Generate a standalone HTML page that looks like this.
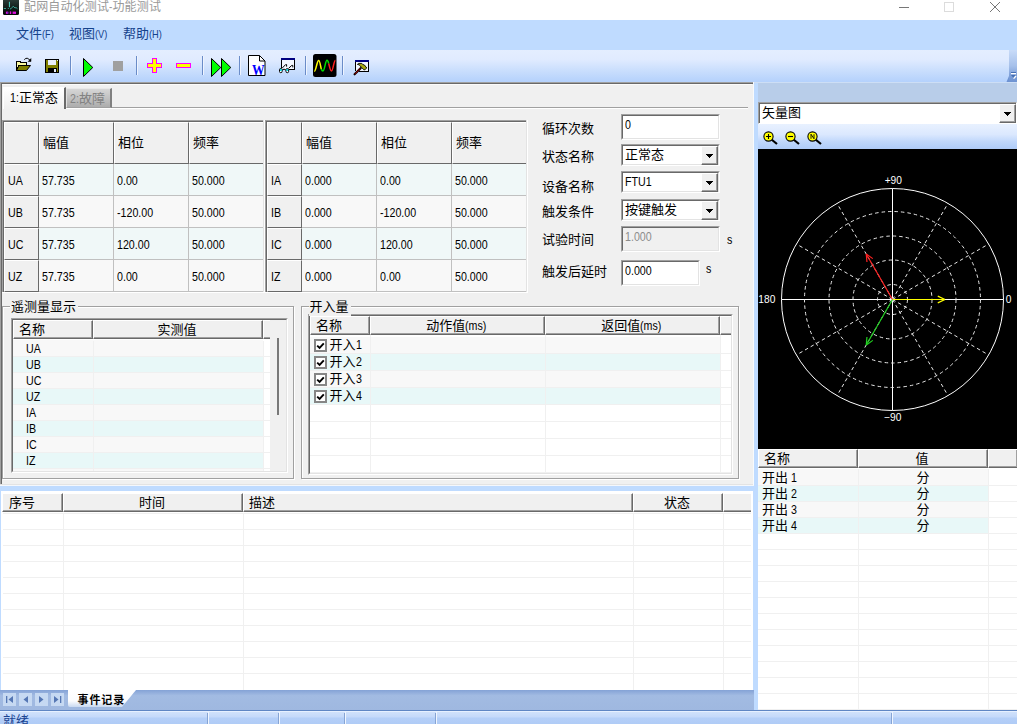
<!DOCTYPE html>
<html lang="zh-CN"><head><meta charset="utf-8"><title>配网自动化测试-功能测试</title>
<style>
html,body{margin:0;padding:0;background:#fff;}
body{width:1017px;height:724px;overflow:hidden;}
#app{position:relative;width:1017px;height:724px;overflow:hidden;background:#fff;
 font-family:"Liberation Sans","Noto Sans CJK SC",sans-serif;font-size:12px;color:#000;}
#app div{position:absolute;box-sizing:border-box;}
#app svg{position:absolute;overflow:visible;}
.t{white-space:nowrap;font-size:13px;}
.t .c{font-size:13px;}
.t .l{display:inline-block;transform:scaleX(0.82);transform-origin:0 50%;}
.m{white-space:nowrap;font-size:11px;color:#15428b;}
.m .c{font-size:13px;}
.ti .c{font-size:12px !important;}
.m .k{font-size:11px;display:inline-block;transform:scaleX(0.84);transform-origin:0 50%;}
.tb .c{font-size:11px !important;letter-spacing:0.9px !important;}

</style></head><body>
<div id="app">
<div class="" style="left:0px;top:0px;width:1017px;height:20px;background:#fff;"></div>
<svg style="left:3px;top:0px" width="16" height="15" viewBox="0 0 16 15">
<defs><linearGradient id="ig" x1="0" y1="0" x2="0" y2="1"><stop offset="0" stop-color="#2a3a36"/><stop offset="0.55" stop-color="#101c18"/><stop offset="1" stop-color="#040806"/></linearGradient></defs>
<path d="M0 0 L16 0 L16 13.5 Q16 15 14.5 15 L1.5 15 Q0 15 0 13.5 Z" fill="url(#ig)"/>
<rect x="5.9" y="1.8" width="1.1" height="5.4" fill="#48c8b8"/>
<path d="M0.8 8.5 L3 8.5 M4.8 8.5 L5.8 8.5 M7 9 L8.2 8.6 L10.2 6.2 L12 8 L13 7.5 L14.5 8.8" fill="none" stroke="#3fae9f" stroke-width="0.9"/>
<rect x="2.9" y="11.6" width="2.4" height="2.2" fill="#e010e0"/>
<rect x="6.8" y="11.4" width="1.4" height="2.6" fill="#e010e0"/>
<rect x="9.6" y="11.6" width="3.4" height="2.3" fill="#e010e0"/>
<rect x="4" y="12" width="1.2" height="1.6" fill="#7020d0"/>
</svg>
<div class="t ti" style="left:24px;top:-3px;height:20px;line-height:20px;color:#999;font-size:12px;letter-spacing:0.15px;"><span class="c">配网自动化测试</span><span class="l" style="margin-right:-0.78px">-</span><span class="c">功能测试</span></div>
<svg style="left:890px;top:0px" width="127" height="20" viewBox="0 0 127 20">
<line x1="9" y1="7.5" x2="19" y2="7.5" stroke="#777" stroke-width="1"/>
<rect x="54.5" y="2.5" width="9" height="9" fill="none" stroke="#dcdcdc" stroke-width="1"/>
<path d="M100 2 L110 12 M110 2 L100 12" stroke="#777" stroke-width="1" fill="none"/>
</svg>
<div class="" style="left:0px;top:20px;width:1017px;height:30px;background:#bfdbff;"></div>
<div class="m" style="left:16px;top:24px;height:20px;line-height:20px;"><span class="c">文件</span><span class="k">(F)</span></div>
<div class="m" style="left:69px;top:24px;height:20px;line-height:20px;"><span class="c">视图</span><span class="k">(V)</span></div>
<div class="m" style="left:123px;top:24px;height:20px;line-height:20px;"><span class="c">帮助</span><span class="k">(H)</span></div>
<div class="" style="left:0px;top:50px;width:1017px;height:32px;background:linear-gradient(#e4eeff 0%,#e0ebff 30%,#cbdffd 62%,#b4d1fc 100%);"></div>
<div class="" style="left:1009px;top:50px;width:8px;height:32px;background:linear-gradient(#c8dbf8 0%,#a6c0ea 50%,#7d9fd8 80%,#6e93d2 100%);"></div>
<svg style="left:1005px;top:70px" width="12" height="12" viewBox="0 0 12 12">
<path d="M4 6 L4 12 L1.5 12 Z" fill="#6e93d2"/>
<rect x="6" y="2" width="5" height="1" fill="#456fb4"/><rect x="6" y="3" width="5" height="1.2" fill="#fff"/>
<path d="M6 5 L11 5 L8.5 8 Z" fill="#456fb4"/>
<path d="M11 6 L8.6 8.6" stroke="#fff" stroke-width="1.3"/>
</svg>
<div class="" style="left:70px;top:56px;width:1px;height:19px;background:#6a8cc8;"></div>
<div class="" style="left:71px;top:56px;width:1px;height:19px;background:#eef4ff;"></div>
<div class="" style="left:136px;top:56px;width:1px;height:19px;background:#6a8cc8;"></div>
<div class="" style="left:137px;top:56px;width:1px;height:19px;background:#eef4ff;"></div>
<div class="" style="left:202px;top:56px;width:1px;height:19px;background:#6a8cc8;"></div>
<div class="" style="left:203px;top:56px;width:1px;height:19px;background:#eef4ff;"></div>
<div class="" style="left:239px;top:56px;width:1px;height:19px;background:#6a8cc8;"></div>
<div class="" style="left:240px;top:56px;width:1px;height:19px;background:#eef4ff;"></div>
<div class="" style="left:305px;top:56px;width:1px;height:19px;background:#6a8cc8;"></div>
<div class="" style="left:306px;top:56px;width:1px;height:19px;background:#eef4ff;"></div>
<div class="" style="left:342px;top:56px;width:1px;height:19px;background:#6a8cc8;"></div>
<div class="" style="left:343px;top:56px;width:1px;height:19px;background:#eef4ff;"></div>
<svg style="left:0;top:50px" width="400" height="32" viewBox="0 50 400 32">
<!-- open folder -->
<g shape-rendering="crispEdges">
<path d="M16.5 70.5 L16.5 61.5 L20.5 61.5 L20.5 62.5 L26.5 62.5 L26.5 65.5 L18.5 65.5 Z" fill="#f8f8a0" stroke="#000" stroke-width="1"/>
</g>
<path d="M16.5 70.5 L19 65.5 L30.5 65.5 L26.5 70.5 Z" fill="#808000" stroke="#000" stroke-width="1" stroke-linejoin="miter"/>
<path d="M24.3 59.6 Q27.2 56.4 30.2 60.6" fill="none" stroke="#000" stroke-width="1"/>
<path d="M31 58.6 L31 61.5 L28.2 61.5 Z" fill="#000" stroke="#000" stroke-width="0.5"/>
<!-- save -->
<g shape-rendering="crispEdges">
<rect x="45.5" y="59.5" width="13" height="13" fill="#808000" stroke="#000" stroke-width="1"/>
<rect x="48" y="60" width="8" height="5" fill="#e8eefa"/>
<rect x="48" y="68" width="9" height="4" fill="#000"/>
<rect x="54" y="69" width="2" height="3" fill="#e8eefa"/>
<rect x="57" y="60" width="1" height="1" fill="#e8eefa"/>
</g>
<!-- play -->
<path d="M83.5 58.5 L92.8 67.5 L83.5 76.5 Z" fill="#00ff00" stroke="#000" stroke-width="1"/>
<!-- stop -->
<rect x="113" y="61" width="10" height="10" fill="#a0a0a0"/>
<!-- plus -->
<g shape-rendering="crispEdges">
<path d="M152.5 58.5 L156.5 58.5 L156.5 63.5 L161.5 63.5 L161.5 67.5 L156.5 67.5 L156.5 72.5 L152.5 72.5 L152.5 67.5 L147.5 67.5 L147.5 63.5 L152.5 63.5 Z" fill="#ffff00" stroke="#ff00ff" stroke-width="1"/>
<!-- minus -->
<rect x="176.5" y="63.5" width="14" height="4" fill="#ffff00" stroke="#ff00ff" stroke-width="1"/>
</g>
<!-- ff -->
<path d="M211.5 58.5 L220.8 67.5 L211.5 76.5 Z" fill="#00ff00" stroke="#000" stroke-width="1"/>
<path d="M221.5 58.5 L230.8 67.5 L221.5 76.5 Z" fill="#00ff00" stroke="#000" stroke-width="1"/>
<!-- word doc -->
<path d="M248.5 55.5 L259.5 55.5 L265 61 L265 75.5 L248.5 75.5 Z" fill="#fff" stroke="#000" stroke-width="1"/>
<path d="M259.5 55.5 L259.5 61 L265 61" fill="none" stroke="#000" stroke-width="1"/>
<text x="252" y="75.3" font-family="Liberation Serif, serif" font-weight="bold" font-size="14.5" textLength="12.6" lengthAdjust="spacingAndGlyphs" fill="#0000ff">W</text>
<!-- glasses chart -->
<g shape-rendering="crispEdges">
<rect x="282" y="60" width="12" height="9" fill="#f4f8ff"/>
<rect x="281" y="58" width="14" height="2" fill="#000080"/>
<rect x="281" y="60" width="1" height="8" fill="#000"/>
<rect x="294" y="60" width="1" height="10" fill="#000"/>
<rect x="289" y="69" width="6" height="1" fill="#000"/>
</g>
<path d="M282 68.3 L285.6 64.6 L286.6 64.6 L286.6 66.6 M288.6 68.3 L291.8 65.4 L292.8 65.4 L292.8 67.4" fill="none" stroke="#000" stroke-width="1"/>
<rect x="279.5" y="68.5" width="2.6" height="4.2" rx="1.2" fill="#fff" stroke="#000" stroke-width="1"/>
<rect x="286" y="68.5" width="2.6" height="4.2" rx="1.2" fill="#fff" stroke="#000" stroke-width="1"/>
<rect x="280" y="69" width="1.6" height="2" fill="#00e8e8"/>
<rect x="286.5" y="69" width="1.6" height="2" fill="#00e8e8"/>
<path d="M282.3 70 Q284 68.2 285.8 70" fill="none" stroke="#000" stroke-width="1"/>
<!-- wave -->
<rect x="313" y="54" width="23.5" height="23" rx="2.5" fill="#000"/>
<path d="M314.3 71.3 C316 71.3 317 60.5 318.6 60.5 C320 60.5 320.4 66 321.3 69" fill="none" stroke="#ffff00" stroke-width="1.5"/>
<path d="M321.3 69 C321.8 70.5 322.4 71 323 71 C324.6 71 325.4 60.3 327 60.3 C327.8 60.3 328.2 61.5 328.7 63.5" fill="none" stroke="#00e000" stroke-width="1.5"/>
<path d="M328.7 63.5 C329.6 67 330.3 71 331.5 71 C333 71 333.8 60.5 335.4 60.5" fill="none" stroke="#ff2020" stroke-width="1.5"/>
<!-- hammer -->
<g shape-rendering="crispEdges">
<rect x="356" y="62" width="12" height="9" fill="#f4f8ff"/>
<rect x="355" y="60" width="14" height="2" fill="#000080"/>
<rect x="355" y="62" width="1" height="9" fill="#000"/>
<rect x="368" y="62" width="1" height="10" fill="#000"/>
<rect x="359" y="71" width="10" height="1" fill="#000"/>
</g>
<path d="M354.6 74.3 L360.6 68.2" stroke="#000" stroke-width="2.2" stroke-linecap="round"/>
<path d="M354.8 74.1 L360.6 68.2" stroke="#c00000" stroke-width="1.1" stroke-dasharray="1 0.7"/>
<path d="M357.4 64.4 L358.6 63.4 L361.8 63.4 L362.6 64.4 L364.4 65 L366.8 68 L365.4 69 L364.4 70.2 L363.4 69 L361.4 67.6 L360.4 66 L359 64.8 Z" fill="#a8a810" stroke="#000" stroke-width="0.9"/>
</svg>
<div class="" style="left:0px;top:82px;width:754px;height:402px;background:#f0f0f0;"></div>
<div class="" style="left:0px;top:484px;width:754px;height:1px;background:#e3e3e3;"></div>
<div class="" style="left:0px;top:485px;width:754px;height:1px;background:#f4f7fc;"></div>
<div class="" style="left:0px;top:82px;width:753px;height:1px;background:#a0a0a0;"></div>
<div class="" style="left:1px;top:83px;width:752px;height:1px;background:#696969;"></div>
<div class="" style="left:2px;top:84px;width:750px;height:1px;background:#fbfbfb;"></div>
<div class="" style="left:0px;top:82px;width:1px;height:402px;background:#a0a0a0;"></div>
<div class="" style="left:1px;top:83px;width:1px;height:401px;background:#696969;"></div>
<div class="" style="left:752px;top:84px;width:1px;height:400px;background:#f0f0f0;"></div>
<div class="" style="left:753px;top:82px;width:1px;height:403px;background:#f8fafc;"></div>
<div class="" style="left:754px;top:82px;width:4px;height:630px;background:#bfdbff;"></div>
<div class="" style="left:66px;top:107px;width:682px;height:1px;background:#a0a0a0;"></div>
<div class="" style="left:66px;top:108px;width:682px;height:1px;background:#fff;"></div>
<div class="" style="left:66px;top:88px;width:46px;height:20px;background:linear-gradient(#d6d6d6,#adadad);border-top:1px solid #e8e8e8;border-left:1px solid #e0e0e0;border-right:2px solid #808080;border-bottom:1px solid #a0a0a0;"></div>
<div class="t" style="left:70px;top:88.5px;height:20px;line-height:20px;color:#828282;"><span class="l" style="margin-right:-1.95px">2:</span><span class="c">故障</span></div>
<div class="" style="left:3px;top:87px;width:63px;height:22px;background:linear-gradient(#ffffff,#f0f0f0);border-top:1px solid #fff;border-left:1px solid #fff;border-right:2px solid #696969;"></div>
<div class="t" style="left:10px;top:87.5px;height:20px;line-height:20px;"><span class="l" style="margin-right:-1.95px">1:</span><span class="c">正常态</span></div>
<div class="" style="left:2px;top:120px;width:263px;height:172px;background:#f0f0f0;"></div>
<div class="" style="left:2px;top:120px;width:261px;height:1px;background:#a0a0a0;"></div>
<div class="" style="left:2px;top:121px;width:261px;height:1px;background:#696969;"></div>
<div class="" style="left:2px;top:120px;width:1px;height:172px;background:#a0a0a0;"></div>
<div class="" style="left:3px;top:121px;width:1px;height:171px;background:#696969;"></div>
<div class="" style="left:2px;top:292px;width:263px;height:1px;background:#fff;"></div>
<div class="" style="left:263px;top:120px;width:1px;height:172px;background:#e3e3e3;"></div>
<div class="" style="left:264px;top:120px;width:1px;height:173px;background:#fff;"></div>
<div class="" style="left:4px;top:122px;width:35px;height:42px;background:#f0f0f0;border-right:1px solid #696969;border-bottom:1px solid #696969;border-top:1px solid #fff;border-left:1px solid #fff;"></div>
<div class="" style="left:39px;top:122px;width:75px;height:42px;background:#f0f0f0;border-right:1px solid #696969;border-bottom:1px solid #696969;border-top:1px solid #fff;border-left:1px solid #fff;"></div>
<div class="t" style="left:43px;top:133px;height:20px;line-height:20px;"><span class="c">幅值</span></div>
<div class="" style="left:114px;top:122px;width:75px;height:42px;background:#f0f0f0;border-right:1px solid #696969;border-bottom:1px solid #696969;border-top:1px solid #fff;border-left:1px solid #fff;"></div>
<div class="t" style="left:118px;top:133px;height:20px;line-height:20px;"><span class="c">相位</span></div>
<div class="" style="left:189px;top:122px;width:74px;height:42px;background:#f0f0f0;border-bottom:1px solid #696969;border-top:1px solid #fff;border-left:1px solid #fff;"></div>
<div class="t" style="left:193px;top:133px;height:20px;line-height:20px;"><span class="c">频率</span></div>
<div class="" style="left:4px;top:164px;width:35px;height:32px;background:#f0f0f0;border-right:1px solid #696969;border-bottom:1px solid #696969;border-top:1px solid #fff;border-left:1px solid #fff;"></div>
<div class="t" style="left:8px;top:171px;height:20px;line-height:20px;"><span class="l" style="margin-right:-3.25px">UA</span></div>
<div class="" style="left:39px;top:164px;width:75px;height:32px;background:#f0f8f8;border-right:1px solid #c0c0c0;border-bottom:1px solid #c0c0c0;"></div>
<div class="t" style="left:42px;top:171px;height:20px;line-height:20px;"><span class="l" style="margin-right:-7.16px">57.735</span></div>
<div class="" style="left:114px;top:164px;width:75px;height:32px;background:#f0f8f8;border-right:1px solid #c0c0c0;border-bottom:1px solid #c0c0c0;"></div>
<div class="t" style="left:117px;top:171px;height:20px;line-height:20px;"><span class="l" style="margin-right:-4.55px">0.00</span></div>
<div class="" style="left:189px;top:164px;width:74px;height:32px;background:#f0f8f8;border-bottom:1px solid #c0c0c0;"></div>
<div class="t" style="left:192px;top:171px;height:20px;line-height:20px;"><span class="l" style="margin-right:-7.16px">50.000</span></div>
<div class="" style="left:4px;top:196px;width:35px;height:32px;background:#f0f0f0;border-right:1px solid #696969;border-bottom:1px solid #696969;border-top:1px solid #fff;border-left:1px solid #fff;"></div>
<div class="t" style="left:8px;top:203px;height:20px;line-height:20px;"><span class="l" style="margin-right:-3.25px">UB</span></div>
<div class="" style="left:39px;top:196px;width:75px;height:32px;background:#f8f8f8;border-right:1px solid #c0c0c0;border-bottom:1px solid #c0c0c0;"></div>
<div class="t" style="left:42px;top:203px;height:20px;line-height:20px;"><span class="l" style="margin-right:-7.16px">57.735</span></div>
<div class="" style="left:114px;top:196px;width:75px;height:32px;background:#f8f8f8;border-right:1px solid #c0c0c0;border-bottom:1px solid #c0c0c0;"></div>
<div class="t" style="left:117px;top:203px;height:20px;line-height:20px;"><span class="l" style="margin-right:-7.94px">-120.00</span></div>
<div class="" style="left:189px;top:196px;width:74px;height:32px;background:#f8f8f8;border-bottom:1px solid #c0c0c0;"></div>
<div class="t" style="left:192px;top:203px;height:20px;line-height:20px;"><span class="l" style="margin-right:-7.16px">50.000</span></div>
<div class="" style="left:4px;top:228px;width:35px;height:32px;background:#f0f0f0;border-right:1px solid #696969;border-bottom:1px solid #696969;border-top:1px solid #fff;border-left:1px solid #fff;"></div>
<div class="t" style="left:8px;top:235px;height:20px;line-height:20px;"><span class="l" style="margin-right:-3.38px">UC</span></div>
<div class="" style="left:39px;top:228px;width:75px;height:32px;background:#f0f8f8;border-right:1px solid #c0c0c0;border-bottom:1px solid #c0c0c0;"></div>
<div class="t" style="left:42px;top:235px;height:20px;line-height:20px;"><span class="l" style="margin-right:-7.16px">57.735</span></div>
<div class="" style="left:114px;top:228px;width:75px;height:32px;background:#f0f8f8;border-right:1px solid #c0c0c0;border-bottom:1px solid #c0c0c0;"></div>
<div class="t" style="left:117px;top:235px;height:20px;line-height:20px;"><span class="l" style="margin-right:-7.16px">120.00</span></div>
<div class="" style="left:189px;top:228px;width:74px;height:32px;background:#f0f8f8;border-bottom:1px solid #c0c0c0;"></div>
<div class="t" style="left:192px;top:235px;height:20px;line-height:20px;"><span class="l" style="margin-right:-7.16px">50.000</span></div>
<div class="" style="left:4px;top:260px;width:35px;height:32px;background:#f0f0f0;border-right:1px solid #696969;border-bottom:1px solid #696969;border-top:1px solid #fff;border-left:1px solid #fff;"></div>
<div class="t" style="left:8px;top:267px;height:20px;line-height:20px;"><span class="l" style="margin-right:-3.12px">UZ</span></div>
<div class="" style="left:39px;top:260px;width:75px;height:32px;background:#f8f8f8;border-right:1px solid #c0c0c0;border-bottom:1px solid #c0c0c0;"></div>
<div class="t" style="left:42px;top:267px;height:20px;line-height:20px;"><span class="l" style="margin-right:-7.16px">57.735</span></div>
<div class="" style="left:114px;top:260px;width:75px;height:32px;background:#f8f8f8;border-right:1px solid #c0c0c0;border-bottom:1px solid #c0c0c0;"></div>
<div class="t" style="left:117px;top:267px;height:20px;line-height:20px;"><span class="l" style="margin-right:-4.55px">0.00</span></div>
<div class="" style="left:189px;top:260px;width:74px;height:32px;background:#f8f8f8;border-bottom:1px solid #c0c0c0;"></div>
<div class="t" style="left:192px;top:267px;height:20px;line-height:20px;"><span class="l" style="margin-right:-7.16px">50.000</span></div>
<div class="" style="left:265px;top:120px;width:263px;height:172px;background:#f0f0f0;"></div>
<div class="" style="left:265px;top:120px;width:261px;height:1px;background:#a0a0a0;"></div>
<div class="" style="left:265px;top:121px;width:261px;height:1px;background:#696969;"></div>
<div class="" style="left:265px;top:120px;width:1px;height:172px;background:#a0a0a0;"></div>
<div class="" style="left:266px;top:121px;width:1px;height:171px;background:#696969;"></div>
<div class="" style="left:265px;top:292px;width:263px;height:1px;background:#fff;"></div>
<div class="" style="left:526px;top:120px;width:1px;height:172px;background:#e3e3e3;"></div>
<div class="" style="left:527px;top:120px;width:1px;height:173px;background:#fff;"></div>
<div class="" style="left:267px;top:122px;width:35px;height:42px;background:#f0f0f0;border-right:1px solid #696969;border-bottom:1px solid #696969;border-top:1px solid #fff;border-left:1px solid #fff;"></div>
<div class="" style="left:302px;top:122px;width:75px;height:42px;background:#f0f0f0;border-right:1px solid #696969;border-bottom:1px solid #696969;border-top:1px solid #fff;border-left:1px solid #fff;"></div>
<div class="t" style="left:306px;top:133px;height:20px;line-height:20px;"><span class="c">幅值</span></div>
<div class="" style="left:377px;top:122px;width:75px;height:42px;background:#f0f0f0;border-right:1px solid #696969;border-bottom:1px solid #696969;border-top:1px solid #fff;border-left:1px solid #fff;"></div>
<div class="t" style="left:381px;top:133px;height:20px;line-height:20px;"><span class="c">相位</span></div>
<div class="" style="left:452px;top:122px;width:74px;height:42px;background:#f0f0f0;border-bottom:1px solid #696969;border-top:1px solid #fff;border-left:1px solid #fff;"></div>
<div class="t" style="left:456px;top:133px;height:20px;line-height:20px;"><span class="c">频率</span></div>
<div class="" style="left:267px;top:164px;width:35px;height:32px;background:#f0f0f0;border-right:1px solid #696969;border-bottom:1px solid #696969;border-top:1px solid #fff;border-left:1px solid #fff;"></div>
<div class="t" style="left:271px;top:171px;height:20px;line-height:20px;"><span class="l" style="margin-right:-2.21px">IA</span></div>
<div class="" style="left:302px;top:164px;width:75px;height:32px;background:#f0f8f8;border-right:1px solid #c0c0c0;border-bottom:1px solid #c0c0c0;"></div>
<div class="t" style="left:305px;top:171px;height:20px;line-height:20px;"><span class="l" style="margin-right:-5.86px">0.000</span></div>
<div class="" style="left:377px;top:164px;width:75px;height:32px;background:#f0f8f8;border-right:1px solid #c0c0c0;border-bottom:1px solid #c0c0c0;"></div>
<div class="t" style="left:380px;top:171px;height:20px;line-height:20px;"><span class="l" style="margin-right:-4.55px">0.00</span></div>
<div class="" style="left:452px;top:164px;width:74px;height:32px;background:#f0f8f8;border-bottom:1px solid #c0c0c0;"></div>
<div class="t" style="left:455px;top:171px;height:20px;line-height:20px;"><span class="l" style="margin-right:-7.16px">50.000</span></div>
<div class="" style="left:267px;top:196px;width:35px;height:32px;background:#f0f0f0;border-right:1px solid #696969;border-bottom:1px solid #696969;border-top:1px solid #fff;border-left:1px solid #fff;"></div>
<div class="t" style="left:271px;top:203px;height:20px;line-height:20px;"><span class="l" style="margin-right:-2.21px">IB</span></div>
<div class="" style="left:302px;top:196px;width:75px;height:32px;background:#f8f8f8;border-right:1px solid #c0c0c0;border-bottom:1px solid #c0c0c0;"></div>
<div class="t" style="left:305px;top:203px;height:20px;line-height:20px;"><span class="l" style="margin-right:-5.86px">0.000</span></div>
<div class="" style="left:377px;top:196px;width:75px;height:32px;background:#f8f8f8;border-right:1px solid #c0c0c0;border-bottom:1px solid #c0c0c0;"></div>
<div class="t" style="left:380px;top:203px;height:20px;line-height:20px;"><span class="l" style="margin-right:-7.94px">-120.00</span></div>
<div class="" style="left:452px;top:196px;width:74px;height:32px;background:#f8f8f8;border-bottom:1px solid #c0c0c0;"></div>
<div class="t" style="left:455px;top:203px;height:20px;line-height:20px;"><span class="l" style="margin-right:-7.16px">50.000</span></div>
<div class="" style="left:267px;top:228px;width:35px;height:32px;background:#f0f0f0;border-right:1px solid #696969;border-bottom:1px solid #696969;border-top:1px solid #fff;border-left:1px solid #fff;"></div>
<div class="t" style="left:271px;top:235px;height:20px;line-height:20px;"><span class="l" style="margin-right:-2.34px">IC</span></div>
<div class="" style="left:302px;top:228px;width:75px;height:32px;background:#f0f8f8;border-right:1px solid #c0c0c0;border-bottom:1px solid #c0c0c0;"></div>
<div class="t" style="left:305px;top:235px;height:20px;line-height:20px;"><span class="l" style="margin-right:-5.86px">0.000</span></div>
<div class="" style="left:377px;top:228px;width:75px;height:32px;background:#f0f8f8;border-right:1px solid #c0c0c0;border-bottom:1px solid #c0c0c0;"></div>
<div class="t" style="left:380px;top:235px;height:20px;line-height:20px;"><span class="l" style="margin-right:-7.16px">120.00</span></div>
<div class="" style="left:452px;top:228px;width:74px;height:32px;background:#f0f8f8;border-bottom:1px solid #c0c0c0;"></div>
<div class="t" style="left:455px;top:235px;height:20px;line-height:20px;"><span class="l" style="margin-right:-7.16px">50.000</span></div>
<div class="" style="left:267px;top:260px;width:35px;height:32px;background:#f0f0f0;border-right:1px solid #696969;border-bottom:1px solid #696969;border-top:1px solid #fff;border-left:1px solid #fff;"></div>
<div class="t" style="left:271px;top:267px;height:20px;line-height:20px;"><span class="l" style="margin-right:-2.08px">IZ</span></div>
<div class="" style="left:302px;top:260px;width:75px;height:32px;background:#f8f8f8;border-right:1px solid #c0c0c0;border-bottom:1px solid #c0c0c0;"></div>
<div class="t" style="left:305px;top:267px;height:20px;line-height:20px;"><span class="l" style="margin-right:-5.86px">0.000</span></div>
<div class="" style="left:377px;top:260px;width:75px;height:32px;background:#f8f8f8;border-right:1px solid #c0c0c0;border-bottom:1px solid #c0c0c0;"></div>
<div class="t" style="left:380px;top:267px;height:20px;line-height:20px;"><span class="l" style="margin-right:-4.55px">0.00</span></div>
<div class="" style="left:452px;top:260px;width:74px;height:32px;background:#f8f8f8;border-bottom:1px solid #c0c0c0;"></div>
<div class="t" style="left:455px;top:267px;height:20px;line-height:20px;"><span class="l" style="margin-right:-7.16px">50.000</span></div>
<div class="t" style="left:542px;top:118.5px;height:20px;line-height:20px;"><span class="c">循环次数</span></div>
<div class="t" style="left:542px;top:147px;height:20px;line-height:20px;"><span class="c">状态名称</span></div>
<div class="t" style="left:542px;top:177px;height:20px;line-height:20px;"><span class="c">设备名称</span></div>
<div class="t" style="left:542px;top:202px;height:20px;line-height:20px;"><span class="c">触发条件</span></div>
<div class="t" style="left:542px;top:230px;height:20px;line-height:20px;"><span class="c">试验时间</span></div>
<div class="t" style="left:542px;top:262px;height:20px;line-height:20px;"><span class="c">触发后延时</span></div>
<div class="" style="left:621px;top:114px;width:99px;height:26px;background:#fff;border-top:1px solid #a0a0a0;border-left:1px solid #a0a0a0;border-right:1px solid #fff;border-bottom:1px solid #fff;"></div>
<div class="" style="left:622px;top:115px;width:97px;height:24px;border-top:1px solid #696969;border-left:1px solid #696969;border-right:1px solid #e3e3e3;border-bottom:1px solid #e3e3e3;"></div>
<div class="t" style="left:625px;top:114.5px;height:20px;line-height:20px;"><span class="l" style="margin-right:-1.30px">0</span></div>
<div class="" style="left:621px;top:144px;width:99px;height:22px;background:#fff;border-top:1px solid #a0a0a0;border-left:1px solid #a0a0a0;border-right:1px solid #fff;border-bottom:1px solid #fff;"></div>
<div class="" style="left:622px;top:145px;width:97px;height:20px;border-top:1px solid #696969;border-left:1px solid #696969;border-right:1px solid #e3e3e3;border-bottom:1px solid #e3e3e3;"></div>
<div class="t" style="left:625px;top:144.5px;height:20px;line-height:20px;"><span class="c">正常态</span></div>
<div class="" style="left:701px;top:146px;width:17px;height:19px;background:#f0f0f0;border-top:1px solid #fff;border-left:1px solid #fff;border-right:1px solid #696969;border-bottom:1px solid #696969;"></div>
<div class="" style="left:702px;top:147px;width:15px;height:17px;border-right:1px solid #a0a0a0;border-bottom:1px solid #a0a0a0;"></div>
<svg style="left:706px;top:154px" width="7" height="4" viewBox="0 0 7 4" shape-rendering="crispEdges"><path d="M0 0 L7 0 L3.5 4 Z" fill="#000"/></svg>
<div class="" style="left:621px;top:171px;width:99px;height:22px;background:#fff;border-top:1px solid #a0a0a0;border-left:1px solid #a0a0a0;border-right:1px solid #fff;border-bottom:1px solid #fff;"></div>
<div class="" style="left:622px;top:172px;width:97px;height:20px;border-top:1px solid #696969;border-left:1px solid #696969;border-right:1px solid #e3e3e3;border-bottom:1px solid #e3e3e3;"></div>
<div class="t" style="left:625px;top:171.5px;height:20px;line-height:20px;"><span class="l" style="margin-right:-5.85px">FTU1</span></div>
<div class="" style="left:701px;top:173px;width:17px;height:19px;background:#f0f0f0;border-top:1px solid #fff;border-left:1px solid #fff;border-right:1px solid #696969;border-bottom:1px solid #696969;"></div>
<div class="" style="left:702px;top:174px;width:15px;height:17px;border-right:1px solid #a0a0a0;border-bottom:1px solid #a0a0a0;"></div>
<svg style="left:706px;top:181px" width="7" height="4" viewBox="0 0 7 4" shape-rendering="crispEdges"><path d="M0 0 L7 0 L3.5 4 Z" fill="#000"/></svg>
<div class="" style="left:621px;top:199px;width:99px;height:22px;background:#fff;border-top:1px solid #a0a0a0;border-left:1px solid #a0a0a0;border-right:1px solid #fff;border-bottom:1px solid #fff;"></div>
<div class="" style="left:622px;top:200px;width:97px;height:20px;border-top:1px solid #696969;border-left:1px solid #696969;border-right:1px solid #e3e3e3;border-bottom:1px solid #e3e3e3;"></div>
<div class="t" style="left:625px;top:199.5px;height:20px;line-height:20px;"><span class="c">按键触发</span></div>
<div class="" style="left:701px;top:201px;width:17px;height:19px;background:#f0f0f0;border-top:1px solid #fff;border-left:1px solid #fff;border-right:1px solid #696969;border-bottom:1px solid #696969;"></div>
<div class="" style="left:702px;top:202px;width:15px;height:17px;border-right:1px solid #a0a0a0;border-bottom:1px solid #a0a0a0;"></div>
<svg style="left:706px;top:209px" width="7" height="4" viewBox="0 0 7 4" shape-rendering="crispEdges"><path d="M0 0 L7 0 L3.5 4 Z" fill="#000"/></svg>
<div class="" style="left:621px;top:226px;width:99px;height:26px;background:#f0f0f0;border-top:1px solid #a0a0a0;border-left:1px solid #a0a0a0;border-right:1px solid #fff;border-bottom:1px solid #fff;"></div>
<div class="" style="left:622px;top:227px;width:97px;height:24px;border-top:1px solid #696969;border-left:1px solid #696969;border-right:1px solid #e3e3e3;border-bottom:1px solid #e3e3e3;"></div>
<div class="t" style="left:625px;top:226.5px;height:20px;line-height:20px;color:#8c8c8c;"><span class="l" style="margin-right:-5.86px">1.000</span></div>
<div class="" style="left:621px;top:260px;width:79px;height:26px;background:#fff;border-top:1px solid #a0a0a0;border-left:1px solid #a0a0a0;border-right:1px solid #fff;border-bottom:1px solid #fff;"></div>
<div class="" style="left:622px;top:261px;width:77px;height:24px;border-top:1px solid #696969;border-left:1px solid #696969;border-right:1px solid #e3e3e3;border-bottom:1px solid #e3e3e3;"></div>
<div class="t" style="left:625px;top:260.5px;height:20px;line-height:20px;"><span class="l" style="margin-right:-5.86px">0.000</span></div>
<div class="t" style="left:727px;top:229.5px;height:20px;line-height:20px;"><span class="l" style="margin-right:-1.17px">s</span></div>
<div class="t" style="left:706px;top:258.5px;height:20px;line-height:20px;"><span class="l" style="margin-right:-1.17px">s</span></div>
<div class="" style="left:2px;top:306px;width:292px;height:173px;border:1px solid #a0a0a0;"></div>
<div class="" style="left:3px;top:307px;width:292px;height:173px;border:1px solid #fff;border-right:1px solid #fff;"></div>
<div class="" style="left:2px;top:306px;width:292px;height:173px;border:1px solid #a0a0a0;border-right:none;border-bottom:none;"></div>
<div class="" style="left:2px;top:306px;width:292px;height:173px;border-right:1px solid #a0a0a0;border-bottom:1px solid #a0a0a0;"></div>
<div class="" style="left:11px;top:318px;width:277px;height:155px;background:#fff;border-top:1px solid #a0a0a0;border-left:1px solid #a0a0a0;border-right:1px solid #fff;border-bottom:1px solid #fff;"></div>
<div class="" style="left:12px;top:319px;width:275px;height:153px;border-top:1px solid #696969;border-left:1px solid #696969;border-right:1px solid #e3e3e3;border-bottom:1px solid #e3e3e3;"></div>
<div class="" style="left:270px;top:320px;width:16px;height:151px;background:#f0f0f0;"></div>
<div class="" style="left:13px;top:320px;width:80px;height:19px;background:#f0f0f0;border-top:1px solid #fff;border-left:1px solid #fff;border-right:1px solid #696969;border-bottom:1px solid #696969;"></div>
<div class="" style="left:14px;top:321px;width:78px;height:17px;border-right:1px solid #a0a0a0;border-bottom:1px solid #a0a0a0;"></div>
<div class="t" style="left:19px;top:319.5px;height:20px;line-height:20px;"><span class="c">名称</span></div>
<div class="" style="left:93px;top:320px;width:170px;height:19px;background:#f0f0f0;border-top:1px solid #fff;border-left:1px solid #fff;border-right:1px solid #696969;border-bottom:1px solid #696969;"></div>
<div class="" style="left:94px;top:321px;width:168px;height:17px;border-right:1px solid #a0a0a0;border-bottom:1px solid #a0a0a0;"></div>
<div class="t" style="left:92px;top:319.5px;height:20px;line-height:20px;width:170px;text-align:center;"><span class="c">实测值</span></div>
<div class="" style="left:263px;top:320px;width:7px;height:19px;background:#f0f0f0;border-top:1px solid #fff;border-left:1px solid #fff;border-bottom:1px solid #696969;"></div>
<div class="" style="left:264px;top:337px;width:6px;height:1px;background:#a0a0a0;"></div>
<div class="" style="left:13px;top:340px;width:250px;height:1px;background:#f8f8f8;"></div>
<div class="" style="left:13px;top:341px;width:250px;height:16px;background:#f8f8f8;"></div>
<div class="" style="left:13px;top:356px;width:257px;height:1px;background:#f0f0f0;"></div>
<div class="" style="left:93px;top:341px;width:1px;height:16px;background:#f0f0f0;"></div>
<div class="" style="left:263px;top:341px;width:1px;height:16px;background:#f0f0f0;"></div>
<div class="t" style="left:26px;top:338.5px;height:20px;line-height:20px;"><span class="l" style="margin-right:-3.25px">UA</span></div>
<div class="" style="left:13px;top:357px;width:250px;height:16px;background:#e8f8f8;"></div>
<div class="" style="left:13px;top:372px;width:257px;height:1px;background:#f0f0f0;"></div>
<div class="" style="left:93px;top:357px;width:1px;height:16px;background:#f0f0f0;"></div>
<div class="" style="left:263px;top:357px;width:1px;height:16px;background:#f0f0f0;"></div>
<div class="t" style="left:26px;top:354.5px;height:20px;line-height:20px;"><span class="l" style="margin-right:-3.25px">UB</span></div>
<div class="" style="left:13px;top:373px;width:250px;height:16px;background:#f8f8f8;"></div>
<div class="" style="left:13px;top:388px;width:257px;height:1px;background:#f0f0f0;"></div>
<div class="" style="left:93px;top:373px;width:1px;height:16px;background:#f0f0f0;"></div>
<div class="" style="left:263px;top:373px;width:1px;height:16px;background:#f0f0f0;"></div>
<div class="t" style="left:26px;top:370.5px;height:20px;line-height:20px;"><span class="l" style="margin-right:-3.38px">UC</span></div>
<div class="" style="left:13px;top:389px;width:250px;height:16px;background:#e8f8f8;"></div>
<div class="" style="left:13px;top:404px;width:257px;height:1px;background:#f0f0f0;"></div>
<div class="" style="left:93px;top:389px;width:1px;height:16px;background:#f0f0f0;"></div>
<div class="" style="left:263px;top:389px;width:1px;height:16px;background:#f0f0f0;"></div>
<div class="t" style="left:26px;top:386.5px;height:20px;line-height:20px;"><span class="l" style="margin-right:-3.12px">UZ</span></div>
<div class="" style="left:13px;top:405px;width:250px;height:16px;background:#f8f8f8;"></div>
<div class="" style="left:13px;top:420px;width:257px;height:1px;background:#f0f0f0;"></div>
<div class="" style="left:93px;top:405px;width:1px;height:16px;background:#f0f0f0;"></div>
<div class="" style="left:263px;top:405px;width:1px;height:16px;background:#f0f0f0;"></div>
<div class="t" style="left:26px;top:402.5px;height:20px;line-height:20px;"><span class="l" style="margin-right:-2.21px">IA</span></div>
<div class="" style="left:13px;top:421px;width:250px;height:16px;background:#e8f8f8;"></div>
<div class="" style="left:13px;top:436px;width:257px;height:1px;background:#f0f0f0;"></div>
<div class="" style="left:93px;top:421px;width:1px;height:16px;background:#f0f0f0;"></div>
<div class="" style="left:263px;top:421px;width:1px;height:16px;background:#f0f0f0;"></div>
<div class="t" style="left:26px;top:418.5px;height:20px;line-height:20px;"><span class="l" style="margin-right:-2.21px">IB</span></div>
<div class="" style="left:13px;top:437px;width:250px;height:16px;background:#f8f8f8;"></div>
<div class="" style="left:13px;top:452px;width:257px;height:1px;background:#f0f0f0;"></div>
<div class="" style="left:93px;top:437px;width:1px;height:16px;background:#f0f0f0;"></div>
<div class="" style="left:263px;top:437px;width:1px;height:16px;background:#f0f0f0;"></div>
<div class="t" style="left:26px;top:434.5px;height:20px;line-height:20px;"><span class="l" style="margin-right:-2.34px">IC</span></div>
<div class="" style="left:13px;top:453px;width:250px;height:16px;background:#e8f8f8;"></div>
<div class="" style="left:13px;top:468px;width:257px;height:1px;background:#f0f0f0;"></div>
<div class="" style="left:93px;top:453px;width:1px;height:16px;background:#f0f0f0;"></div>
<div class="" style="left:263px;top:453px;width:1px;height:16px;background:#f0f0f0;"></div>
<div class="t" style="left:26px;top:450.5px;height:20px;line-height:20px;"><span class="l" style="margin-right:-2.08px">IZ</span></div>
<div class="" style="left:13px;top:469px;width:250px;height:2px;background:#f8f8f8;"></div>
<div class="" style="left:93px;top:469px;width:1px;height:2px;background:#f0f0f0;"></div>
<div class="" style="left:263px;top:469px;width:1px;height:2px;background:#f0f0f0;"></div>
<div class="" style="left:277px;top:338px;width:2px;height:77px;background:#787878;"></div>
<div class="" style="left:301px;top:306px;width:438px;height:173px;border:1px solid #a0a0a0;"></div>
<div class="" style="left:302px;top:307px;width:438px;height:173px;border:1px solid #fff;border-right:1px solid #fff;"></div>
<div class="" style="left:301px;top:306px;width:438px;height:173px;border:1px solid #a0a0a0;border-right:none;border-bottom:none;"></div>
<div class="" style="left:301px;top:306px;width:438px;height:173px;border-right:1px solid #a0a0a0;border-bottom:1px solid #a0a0a0;"></div>
<div class="" style="left:308px;top:314px;width:425px;height:161px;background:#fff;border-top:1px solid #a0a0a0;border-left:1px solid #a0a0a0;border-right:1px solid #fff;border-bottom:1px solid #fff;"></div>
<div class="" style="left:309px;top:315px;width:423px;height:159px;border-top:1px solid #696969;border-left:1px solid #696969;border-right:1px solid #e3e3e3;border-bottom:1px solid #e3e3e3;"></div>
<div class="" style="left:310px;top:316px;width:60px;height:19px;background:#f0f0f0;border-top:1px solid #fff;border-left:1px solid #fff;border-right:1px solid #696969;border-bottom:1px solid #696969;"></div>
<div class="" style="left:311px;top:317px;width:58px;height:17px;border-right:1px solid #a0a0a0;border-bottom:1px solid #a0a0a0;"></div>
<div class="t" style="left:316px;top:315.5px;height:20px;line-height:20px;"><span class="c">名称</span></div>
<div class="" style="left:370px;top:316px;width:175px;height:19px;background:#f0f0f0;border-top:1px solid #fff;border-left:1px solid #fff;border-right:1px solid #696969;border-bottom:1px solid #696969;"></div>
<div class="" style="left:371px;top:317px;width:173px;height:17px;border-right:1px solid #a0a0a0;border-bottom:1px solid #a0a0a0;"></div>
<div class="t" style="left:369px;top:315.5px;height:20px;line-height:20px;width:175px;text-align:center;"><span class="c">动作值</span><span class="l" style="margin-right:-4.68px">(ms)</span></div>
<div class="" style="left:545px;top:316px;width:175px;height:19px;background:#f0f0f0;border-top:1px solid #fff;border-left:1px solid #fff;border-right:1px solid #696969;border-bottom:1px solid #696969;"></div>
<div class="" style="left:546px;top:317px;width:173px;height:17px;border-right:1px solid #a0a0a0;border-bottom:1px solid #a0a0a0;"></div>
<div class="t" style="left:544px;top:315.5px;height:20px;line-height:20px;width:175px;text-align:center;"><span class="c">返回值</span><span class="l" style="margin-right:-4.68px">(ms)</span></div>
<div class="" style="left:720px;top:316px;width:11px;height:19px;background:#f0f0f0;border-top:1px solid #fff;border-left:1px solid #fff;border-bottom:1px solid #696969;"></div>
<div class="" style="left:721px;top:333px;width:10px;height:1px;background:#a0a0a0;"></div>
<div class="" style="left:310px;top:337px;width:410px;height:17px;background:#f8f8f8;"></div>
<div class="" style="left:310px;top:353px;width:421px;height:1px;background:#f0f0f0;"></div>
<div class="" style="left:310px;top:354px;width:410px;height:17px;background:#e8f8f8;"></div>
<div class="" style="left:310px;top:370px;width:421px;height:1px;background:#f0f0f0;"></div>
<div class="" style="left:310px;top:371px;width:410px;height:17px;background:#f8f8f8;"></div>
<div class="" style="left:310px;top:387px;width:421px;height:1px;background:#f0f0f0;"></div>
<div class="" style="left:310px;top:388px;width:410px;height:17px;background:#e8f8f8;"></div>
<div class="" style="left:310px;top:404px;width:421px;height:1px;background:#f0f0f0;"></div>
<div class="" style="left:310px;top:421px;width:421px;height:1px;background:#f0f0f0;"></div>
<div class="" style="left:310px;top:438px;width:421px;height:1px;background:#f0f0f0;"></div>
<div class="" style="left:310px;top:455px;width:421px;height:1px;background:#f0f0f0;"></div>
<div class="" style="left:310px;top:472px;width:421px;height:1px;background:#f0f0f0;"></div>
<div class="" style="left:370px;top:335px;width:1px;height:138px;background:#f0f0f0;"></div>
<div class="" style="left:545px;top:335px;width:1px;height:138px;background:#f0f0f0;"></div>
<div class="" style="left:720px;top:335px;width:1px;height:138px;background:#f0f0f0;"></div>
<div class="" style="left:314px;top:339px;width:13px;height:13px;background:#fff;border:2px solid #868686;"></div>
<svg style="left:316px;top:341.5px" width="9" height="8" viewBox="0 0 9 8"><path d="M1.2 3.6 L3.6 6 L7.8 1.4" fill="none" stroke="#000" stroke-width="1.9"/></svg>
<div class="t" style="left:329.5px;top:335px;height:20px;line-height:20px;"><span class="c">开入</span><span class="l" style="margin-right:-1.30px">1</span></div>
<div class="" style="left:314px;top:356px;width:13px;height:13px;background:#fff;border:2px solid #868686;"></div>
<svg style="left:316px;top:358.5px" width="9" height="8" viewBox="0 0 9 8"><path d="M1.2 3.6 L3.6 6 L7.8 1.4" fill="none" stroke="#000" stroke-width="1.9"/></svg>
<div class="t" style="left:329.5px;top:352px;height:20px;line-height:20px;"><span class="c">开入</span><span class="l" style="margin-right:-1.30px">2</span></div>
<div class="" style="left:314px;top:373px;width:13px;height:13px;background:#fff;border:2px solid #868686;"></div>
<svg style="left:316px;top:375.5px" width="9" height="8" viewBox="0 0 9 8"><path d="M1.2 3.6 L3.6 6 L7.8 1.4" fill="none" stroke="#000" stroke-width="1.9"/></svg>
<div class="t" style="left:329.5px;top:369px;height:20px;line-height:20px;"><span class="c">开入</span><span class="l" style="margin-right:-1.30px">3</span></div>
<div class="" style="left:314px;top:390px;width:13px;height:13px;background:#fff;border:2px solid #868686;"></div>
<svg style="left:316px;top:392.5px" width="9" height="8" viewBox="0 0 9 8"><path d="M1.2 3.6 L3.6 6 L7.8 1.4" fill="none" stroke="#000" stroke-width="1.9"/></svg>
<div class="t" style="left:329.5px;top:386px;height:20px;line-height:20px;"><span class="c">开入</span><span class="l" style="margin-right:-1.30px">4</span></div>
<div class="t" style="left:10px;top:299px;height:17px;line-height:16px;background:#f0f0f0;padding:0 2px 0 1px;"><span class="c">遥测量显示</span></div>
<div class="t" style="left:308.5px;top:299px;height:17px;line-height:16px;background:#f0f0f0;padding:0 2px 0 1px;"><span class="c">开入量</span></div>
<div class="" style="left:0px;top:486px;width:754px;height:5px;background:#bfdbff;"></div>
<div class="" style="left:0px;top:491px;width:753px;height:199px;background:#fff;"></div>
<div class="" style="left:0px;top:491px;width:1px;height:199px;background:#bfdbff;"></div>
<div class="" style="left:753px;top:491px;width:1px;height:199px;background:#bfdbff;"></div>
<div class="" style="left:2px;top:493px;width:61px;height:19px;background:#f0f0f0;border-top:1px solid #fff;border-left:1px solid #fff;border-right:1px solid #696969;border-bottom:1px solid #696969;"></div>
<div class="" style="left:3px;top:494px;width:59px;height:17px;border-right:1px solid #a0a0a0;border-bottom:1px solid #a0a0a0;"></div>
<div class="t" style="left:9px;top:492.5px;height:20px;line-height:20px;"><span class="c">序号</span></div>
<div class="" style="left:63px;top:493px;width:180px;height:19px;background:#f0f0f0;border-top:1px solid #fff;border-left:1px solid #fff;border-right:1px solid #696969;border-bottom:1px solid #696969;"></div>
<div class="" style="left:64px;top:494px;width:178px;height:17px;border-right:1px solid #a0a0a0;border-bottom:1px solid #a0a0a0;"></div>
<div class="t" style="left:62px;top:492.5px;height:20px;line-height:20px;width:180px;text-align:center;"><span class="c">时间</span></div>
<div class="" style="left:243px;top:493px;width:390px;height:19px;background:#f0f0f0;border-top:1px solid #fff;border-left:1px solid #fff;border-right:1px solid #696969;border-bottom:1px solid #696969;"></div>
<div class="" style="left:244px;top:494px;width:388px;height:17px;border-right:1px solid #a0a0a0;border-bottom:1px solid #a0a0a0;"></div>
<div class="t" style="left:249px;top:492.5px;height:20px;line-height:20px;"><span class="c">描述</span></div>
<div class="" style="left:633px;top:493px;width:90px;height:19px;background:#f0f0f0;border-top:1px solid #fff;border-left:1px solid #fff;border-right:1px solid #696969;border-bottom:1px solid #696969;"></div>
<div class="" style="left:634px;top:494px;width:88px;height:17px;border-right:1px solid #a0a0a0;border-bottom:1px solid #a0a0a0;"></div>
<div class="t" style="left:632px;top:492.5px;height:20px;line-height:20px;width:90px;text-align:center;"><span class="c">状态</span></div>
<div class="" style="left:723px;top:493px;width:28px;height:19px;background:#f0f0f0;border-top:1px solid #fff;border-left:1px solid #fff;border-bottom:1px solid #696969;"></div>
<div class="" style="left:724px;top:510px;width:27px;height:1px;background:#a0a0a0;"></div>
<div class="" style="left:3px;top:513px;width:748px;height:1px;background:#f0f0f0;"></div>
<div class="" style="left:3px;top:529px;width:748px;height:1px;background:#f0f0f0;"></div>
<div class="" style="left:3px;top:545px;width:748px;height:1px;background:#f0f0f0;"></div>
<div class="" style="left:3px;top:561px;width:748px;height:1px;background:#f0f0f0;"></div>
<div class="" style="left:3px;top:577px;width:748px;height:1px;background:#f0f0f0;"></div>
<div class="" style="left:3px;top:593px;width:748px;height:1px;background:#f0f0f0;"></div>
<div class="" style="left:3px;top:609px;width:748px;height:1px;background:#f0f0f0;"></div>
<div class="" style="left:3px;top:625px;width:748px;height:1px;background:#f0f0f0;"></div>
<div class="" style="left:3px;top:641px;width:748px;height:1px;background:#f0f0f0;"></div>
<div class="" style="left:3px;top:657px;width:748px;height:1px;background:#f0f0f0;"></div>
<div class="" style="left:3px;top:673px;width:748px;height:1px;background:#f0f0f0;"></div>
<div class="" style="left:63px;top:513px;width:1px;height:177px;background:#f0f0f0;"></div>
<div class="" style="left:243px;top:513px;width:1px;height:177px;background:#f0f0f0;"></div>
<div class="" style="left:633px;top:513px;width:1px;height:177px;background:#f0f0f0;"></div>
<div class="" style="left:723px;top:513px;width:1px;height:177px;background:#f0f0f0;"></div>
<div class="" style="left:0px;top:690px;width:754px;height:20px;background:linear-gradient(#84a2d6 0%,#a2bbe2 28%,#9fb8e0 100%);"></div>
<div class="" style="left:3px;top:693px;width:13px;height:13px;background:#c6d9f2;"></div>
<div class="" style="left:19px;top:693px;width:13px;height:13px;background:#c6d9f2;"></div>
<div class="" style="left:35px;top:693px;width:13px;height:13px;background:#c6d9f2;"></div>
<div class="" style="left:51px;top:693px;width:13px;height:13px;background:#c6d9f2;"></div>
<svg style="left:3px;top:693px" width="64" height="13" viewBox="0 0 64 13">
<g fill="#5577b4">
<rect x="3" y="3" width="1.3" height="7"/><path d="M10 3 L10 10 L5.5 6.5 Z"/>
<path d="M25 3 L25 10 L20.5 6.5 Z"/>
<path d="M36 3 L36 10 L40.5 6.5 Z"/>
<path d="M51 3 L51 10 L55.5 6.5 Z"/><rect x="57" y="3" width="1.3" height="7"/>
</g></svg>
<svg style="left:66px;top:689px" width="74" height="19" viewBox="0 0 74 19">
<defs><linearGradient id="tg" x1="0" y1="0" x2="0" y2="1"><stop offset="0" stop-color="#ffffff"/><stop offset="0.65" stop-color="#fbfcfe"/><stop offset="1" stop-color="#c8d9f1"/></linearGradient></defs>
<path d="M2 1 L70 1 L56 18 L4 18 Q2 18 2 16 Z" fill="url(#tg)"/></svg>
<div class="t tb" style="left:77.5px;top:689.5px;height:20px;line-height:20px;font-weight:bold;letter-spacing:0.9px;"><span class="c">事件记录</span></div>
<div class="" style="left:0px;top:710px;width:1017px;height:14px;background:linear-gradient(#d6e6fd 0px,#d0e1fb 2px,#c4d9fa 7px,#b4cff8 8px,#b0ccf6 14px);"></div>
<div class="" style="left:0px;top:710px;width:1017px;height:1px;background:#5f86c4;"></div>
<div class="" style="left:0px;top:711px;width:1017px;height:1px;background:#e6f0ff;"></div>
<div class="" style="left:207px;top:713px;width:1px;height:11px;background:#86a4d4;"></div>
<div class="" style="left:208px;top:712px;width:1px;height:12px;background:#f0f6ff;"></div>
<div class="" style="left:278px;top:713px;width:1px;height:11px;background:#86a4d4;"></div>
<div class="" style="left:279px;top:712px;width:1px;height:12px;background:#f0f6ff;"></div>
<div class="" style="left:344px;top:713px;width:1px;height:11px;background:#86a4d4;"></div>
<div class="" style="left:345px;top:712px;width:1px;height:12px;background:#f0f6ff;"></div>
<div class="" style="left:435px;top:713px;width:1px;height:11px;background:#86a4d4;"></div>
<div class="" style="left:436px;top:712px;width:1px;height:12px;background:#f0f6ff;"></div>
<div class="" style="left:891px;top:713px;width:1px;height:11px;background:#86a4d4;"></div>
<div class="" style="left:892px;top:712px;width:1px;height:12px;background:#f0f6ff;"></div>
<div class="t" style="left:3px;top:711px;height:20px;line-height:20px;color:#1c4592;"><span class="c">就绪</span></div>
<div class="" style="left:758px;top:82px;width:259px;height:628px;background:#fff;"></div>
<div class="" style="left:754px;top:82px;width:263px;height:1px;background:#cddef5;"></div>
<div class="" style="left:758px;top:83px;width:259px;height:19px;background:#b8cde9;"></div>
<div class="" style="left:758px;top:102px;width:259px;height:22px;background:#fff;border-top:1px solid #a0a0a0;border-left:1px solid #a0a0a0;border-right:1px solid #fff;border-bottom:1px solid #fff;"></div>
<div class="" style="left:759px;top:103px;width:257px;height:20px;border-top:1px solid #696969;border-left:1px solid #696969;"></div>
<div class="t" style="left:762px;top:103px;height:20px;line-height:20px;"><span class="c">矢量图</span></div>
<div class="" style="left:999px;top:104px;width:17px;height:19px;background:#f0f0f0;border-top:1px solid #fff;border-left:1px solid #fff;border-right:1px solid #696969;border-bottom:1px solid #696969;"></div>
<div class="" style="left:1000px;top:105px;width:15px;height:17px;border-right:1px solid #a0a0a0;border-bottom:1px solid #a0a0a0;"></div>
<svg style="left:1004px;top:112px" width="7" height="4" viewBox="0 0 7 4" shape-rendering="crispEdges"><path d="M0 0 L7 0 L3.5 4 Z" fill="#000"/></svg>
<div class="" style="left:758px;top:124px;width:259px;height:25px;background:linear-gradient(#e8f1ff 0%,#dbe8fe 42%,#c0d7fb 70%,#aecbf8 100%);"></div>
<svg style="left:763px;top:131px" width="16" height="15" viewBox="0 0 16 15"><path d="M8.5 8.5 L14 13" stroke="#000" stroke-width="2.2"/><circle cx="5.5" cy="5.5" r="4.6" fill="#ffff00" stroke="#000" stroke-width="1.1"/><path d="M3 5.5 L8 5.5 M5.5 3 L5.5 8" stroke="#000" stroke-width="1.1"/></svg>
<svg style="left:785px;top:131px" width="16" height="15" viewBox="0 0 16 15"><path d="M8.5 8.5 L14 13" stroke="#000" stroke-width="2.2"/><circle cx="5.5" cy="5.5" r="4.6" fill="#ffff00" stroke="#000" stroke-width="1.1"/><path d="M3 5.5 L8 5.5" stroke="#000" stroke-width="1.1"/></svg>
<svg style="left:807px;top:131px" width="16" height="15" viewBox="0 0 16 15"><path d="M8.5 8.5 L14 13" stroke="#000" stroke-width="2.2"/><circle cx="5.5" cy="5.5" r="4.6" fill="#ffff00" stroke="#000" stroke-width="1.1"/><path d="M4 7.8 L4 3.2 L7 7.8 L7 3.2" stroke="#000" stroke-width="0.9" fill="none"/></svg>
<svg style="left:758px;top:149px" width="259" height="300" viewBox="758 149 259 300"><rect x="758" y="149" width="259" height="300" fill="#000"/><g fill="none" stroke="#fff" stroke-width="1"><circle cx="892.5" cy="299.5" r="111"/><path d="M781.5 299.5 L1003.5 299.5 M892.5 188.5 L892.5 410.5"/></g><g fill="none" stroke="#e8e8e8" stroke-width="1" stroke-dasharray="3.5 3"><circle cx="892.5" cy="299.5" r="15"/><circle cx="892.5" cy="299.5" r="39.5"/><circle cx="892.5" cy="299.5" r="63.5"/><circle cx="892.5" cy="299.5" r="88"/><line x1="892.5" y1="299.5" x2="988.63" y2="244.00"/><line x1="892.5" y1="299.5" x2="948.00" y2="203.37"/><line x1="892.5" y1="299.5" x2="837.00" y2="203.37"/><line x1="892.5" y1="299.5" x2="796.37" y2="244.00"/><line x1="892.5" y1="299.5" x2="796.37" y2="355.00"/><line x1="892.5" y1="299.5" x2="837.00" y2="395.63"/><line x1="892.5" y1="299.5" x2="948.00" y2="395.63"/><line x1="892.5" y1="299.5" x2="988.63" y2="355.00"/></g><g fill="none" stroke="#ffff00" stroke-width="1.2"><line x1="892.5" y1="299.5" x2="945.00" y2="299.50"/><line x1="945.00" y1="299.50" x2="937.75" y2="296.12"/><line x1="945.00" y1="299.50" x2="937.75" y2="302.88"/></g><g fill="none" stroke="#ff2020" stroke-width="1.2"><line x1="892.5" y1="299.5" x2="866.25" y2="254.03"/><line x1="866.25" y1="254.03" x2="866.95" y2="262.00"/><line x1="866.25" y1="254.03" x2="872.80" y2="258.62"/></g><g fill="none" stroke="#20d020" stroke-width="1.2"><line x1="892.5" y1="299.5" x2="866.25" y2="344.97"/><line x1="866.25" y1="344.97" x2="872.80" y2="340.38"/><line x1="866.25" y1="344.97" x2="866.95" y2="337.00"/></g><g fill="#fff" font-family="Liberation Sans, sans-serif" font-size="10.2"><text x="893.3" y="184.3" text-anchor="middle">+90</text><text x="892.8" y="420.8" text-anchor="middle">−90</text><text x="758.3" y="303">180</text><text x="1005.7" y="303">0</text></g></svg>
<div class="" style="left:758px;top:449px;width:100px;height:19px;background:#f0f0f0;border-top:1px solid #fff;border-left:1px solid #fff;border-right:1px solid #696969;border-bottom:1px solid #696969;"></div>
<div class="" style="left:759px;top:450px;width:98px;height:17px;border-right:1px solid #a0a0a0;border-bottom:1px solid #a0a0a0;"></div>
<div class="t" style="left:764px;top:448.5px;height:20px;line-height:20px;"><span class="c">名称</span></div>
<div class="" style="left:858px;top:449px;width:130px;height:19px;background:#f0f0f0;border-top:1px solid #fff;border-left:1px solid #fff;border-right:1px solid #696969;border-bottom:1px solid #696969;"></div>
<div class="" style="left:859px;top:450px;width:128px;height:17px;border-right:1px solid #a0a0a0;border-bottom:1px solid #a0a0a0;"></div>
<div class="t" style="left:857px;top:448.5px;height:20px;line-height:20px;width:130px;text-align:center;"><span class="c">值</span></div>
<div class="" style="left:988px;top:449px;width:30px;height:19px;background:#f0f0f0;border-top:1px solid #fff;border-left:1px solid #fff;border-right:1px solid #696969;border-bottom:1px solid #696969;"></div>
<div class="" style="left:989px;top:450px;width:28px;height:17px;border-right:1px solid #a0a0a0;border-bottom:1px solid #a0a0a0;"></div>
<div class="" style="left:758px;top:469px;width:230px;height:1px;background:#f8f8f8;"></div>
<div class="" style="left:758px;top:470px;width:230px;height:16px;background:#f8f8f8;"></div>
<div class="t" style="left:762px;top:467.5px;height:20px;line-height:20px;"><span class="c">开出</span><span class="l" style="margin-right:-1.95px">&nbsp;1</span></div>
<div class="t" style="left:858px;top:467.5px;height:20px;line-height:20px;width:130px;text-align:center;"><span class="c">分</span></div>
<div class="" style="left:758px;top:486px;width:230px;height:16px;background:#e8f8f8;"></div>
<div class="t" style="left:762px;top:483.5px;height:20px;line-height:20px;"><span class="c">开出</span><span class="l" style="margin-right:-1.95px">&nbsp;2</span></div>
<div class="t" style="left:858px;top:483.5px;height:20px;line-height:20px;width:130px;text-align:center;"><span class="c">分</span></div>
<div class="" style="left:758px;top:502px;width:230px;height:16px;background:#f8f8f8;"></div>
<div class="t" style="left:762px;top:499.5px;height:20px;line-height:20px;"><span class="c">开出</span><span class="l" style="margin-right:-1.95px">&nbsp;3</span></div>
<div class="t" style="left:858px;top:499.5px;height:20px;line-height:20px;width:130px;text-align:center;"><span class="c">分</span></div>
<div class="" style="left:758px;top:518px;width:230px;height:16px;background:#e8f8f8;"></div>
<div class="t" style="left:762px;top:515.5px;height:20px;line-height:20px;"><span class="c">开出</span><span class="l" style="margin-right:-1.95px">&nbsp;4</span></div>
<div class="t" style="left:858px;top:515.5px;height:20px;line-height:20px;width:130px;text-align:center;"><span class="c">分</span></div>
<div class="" style="left:758px;top:485px;width:259px;height:1px;background:#f0f0f0;"></div>
<div class="" style="left:758px;top:501px;width:259px;height:1px;background:#f0f0f0;"></div>
<div class="" style="left:758px;top:517px;width:259px;height:1px;background:#f0f0f0;"></div>
<div class="" style="left:758px;top:533px;width:259px;height:1px;background:#f0f0f0;"></div>
<div class="" style="left:758px;top:549px;width:259px;height:1px;background:#f0f0f0;"></div>
<div class="" style="left:758px;top:565px;width:259px;height:1px;background:#f0f0f0;"></div>
<div class="" style="left:758px;top:581px;width:259px;height:1px;background:#f0f0f0;"></div>
<div class="" style="left:758px;top:597px;width:259px;height:1px;background:#f0f0f0;"></div>
<div class="" style="left:758px;top:613px;width:259px;height:1px;background:#f0f0f0;"></div>
<div class="" style="left:758px;top:629px;width:259px;height:1px;background:#f0f0f0;"></div>
<div class="" style="left:758px;top:645px;width:259px;height:1px;background:#f0f0f0;"></div>
<div class="" style="left:758px;top:661px;width:259px;height:1px;background:#f0f0f0;"></div>
<div class="" style="left:758px;top:677px;width:259px;height:1px;background:#f0f0f0;"></div>
<div class="" style="left:758px;top:693px;width:259px;height:1px;background:#f0f0f0;"></div>
<div class="" style="left:758px;top:709px;width:259px;height:1px;background:#f0f0f0;"></div>
<div class="" style="left:858px;top:469px;width:1px;height:241px;background:#f0f0f0;"></div>
<div class="" style="left:988px;top:469px;width:1px;height:241px;background:#f0f0f0;"></div>
</div>
</body></html>
